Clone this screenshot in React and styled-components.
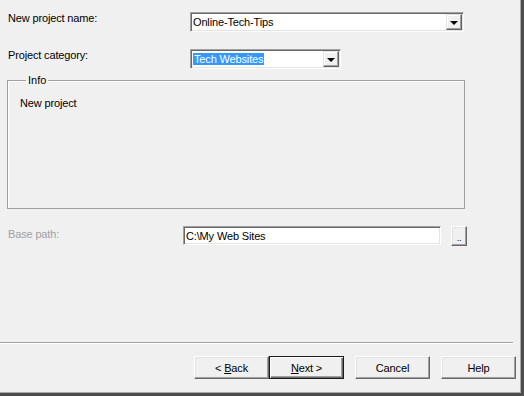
import React from "react";
import styled, { createGlobalStyle } from "styled-components";

const GlobalStyle = createGlobalStyle`
  html, body {
    margin: 0;
    padding: 0;
    background: #f0f0f0;
  }
  body {
    font-family: "Liberation Sans", Arial, sans-serif;
    font-size: 11px;
    color: #000;
  }
`;

const Frame = styled.div`
  box-sizing: border-box;
  width: 524px;
  height: 396px;
  background: #f0f0f0;
  border-right: 3px solid #4d4d4d;
  border-bottom: 3px solid #4d4d4d;
  box-shadow: inset -1px -1px 0 #a9a9a9;
  padding: 12px 0 0 8px;
  display: flex;
  flex-direction: column;
`;

const Row = styled.div`
  display: flex;
  align-items: flex-start;
  margin-top: ${(p) => p.$top || 0}px;
`;

const Label = styled.div`
  width: ${(p) => p.$width}px;
  line-height: 13px;
  padding-top: ${(p) => p.$pad || 0}px;
  color: ${(p) => (p.$disabled ? "#a0a0a0" : "#000")};
  letter-spacing: -0.15px;
`;

const Sunken = styled.div`
  box-sizing: border-box;
  width: ${(p) => p.$width}px;
  height: ${(p) => p.$height || 20}px;
  background: #fff;
  border: 1px solid;
  border-color: #a0a0a0 #ffffff #ffffff #a0a0a0;
  box-shadow: inset 1px 1px 0 #696969, inset -1px -1px 0 #e3e3e3;
  display: flex;
  align-items: center;
  padding: 0 2px 0 2px;
  line-height: 13px;
  color: #000;
`;

const Value = styled.span`
  flex: 1;
  padding-top: 1px;
  letter-spacing: -0.15px;
  white-space: nowrap;
`;

const Selected = styled.span`
  background: #3399ff;
  color: #fff;
  padding: 0 1px;
  letter-spacing: -0.15px;
`;

const DropButton = styled.div`
  box-sizing: border-box;
  width: 16px;
  height: 16px;
  background: #f0f0f0;
  border: 1px solid;
  border-color: #e3e3e3 #646464 #646464 #e3e3e3;
  box-shadow: inset -1px -1px 0 #a0a0a0, inset 1px 1px 0 #ffffff;
  display: flex;
  align-items: center;
  justify-content: center;
  margin-right: -1px;
`;

const Arrow = styled.span`
  width: 0;
  height: 0;
  border-left: 4px solid transparent;
  border-right: 4px solid transparent;
  border-top: 4px solid #000;
  margin-top: 1px;
`;

const Group = styled.fieldset`
  box-sizing: border-box;
  width: 458px;
  height: 135px;
  margin: 5px 0 0 -1px;
  padding: 10px 12px;
  border: 1px solid #a0a0a0;
  box-shadow: inset 1px 1px 0 #ffffff;
`;

const Legend = styled.legend`
  padding: 0 2px;
  margin-left: 6px;
  line-height: 13px;
`;

const GroupText = styled.div`
  line-height: 13px;
  letter-spacing: -0.15px;
`;

const Raised = styled.button`
  box-sizing: border-box;
  width: ${(p) => p.$width || 75}px;
  height: ${(p) => p.$height || 23}px;
  margin: 0 0 0 ${(p) => p.$gap || 0}px;
  padding: 0;
  background: #f0f0f0;
  font-family: "Liberation Sans", Arial, sans-serif;
  font-size: 11px;
  color: #000;
  letter-spacing: -0.15px;
  border: 1px solid;
  border-color: ${(p) =>
    p.$default ? "#1a1a1a" : "#ffffff #696969 #696969 #ffffff"};
  box-shadow: ${(p) =>
    p.$default
      ? "inset 1px 1px 0 #ffffff, inset -1px -1px 0 #696969, inset -2px -2px 0 #a0a0a0"
      : "inset -1px -1px 0 #a0a0a0, inset 1px 1px 0 #e3e3e3"};
  display: flex;
  align-items: center;
  justify-content: center;
  cursor: default;
`;

const Dots = styled.span`
  font-size: 9px;
  margin-top: 4px;
`;

const Spacer = styled.div`
  flex: 1;
`;

const Separator = styled.div`
  width: 513px;
  margin-left: -8px;
  height: 1px;
  background: #a0a0a0;
  border-bottom: 1px solid #ffffff;
`;

const ButtonBar = styled.div`
  display: flex;
  margin: 12px 0 14px 186px;
`;

const Mnemonic = styled.span`
  text-decoration: underline;
  text-underline-offset: 1px;
`;

export default function App() {
  return (
    <>
      <GlobalStyle />
      <Frame>
        <Row>
          <Label $width={182}>New project name:</Label>
          <Sunken $width={274}>
            <Value>Online-Tech-Tips</Value>
            <DropButton>
              <Arrow />
            </DropButton>
          </Sunken>
        </Row>

        <Row $top={17}>
          <Label $width={182}>Project category:</Label>
          <Sunken $width={151}>
            <Value>
              <Selected>Tech Websites</Selected>
            </Value>
            <DropButton>
              <Arrow />
            </DropButton>
          </Sunken>
        </Row>

        <Group>
          <Legend>Info</Legend>
          <GroupText>New project</GroupText>
        </Group>

        <Row $top={17}>
          <Label $width={175} $pad={2} $disabled>
            Base path:
          </Label>
          <Sunken $width={258} $height={19}>
            <Value>C:\My Web Sites</Value>
          </Sunken>
          <Raised $width={16} $height={20} $gap={10}>
            <Dots>..</Dots>
          </Raised>
        </Row>

        <Spacer />
        <Separator />
        <ButtonBar>
          <Raised>
            &lt;&nbsp;<Mnemonic>B</Mnemonic>ack
          </Raised>
          <Raised $default>
            <Mnemonic>N</Mnemonic>ext &gt;
          </Raised>
          <Raised $gap={11}>Cancel</Raised>
          <Raised $gap={11}>Help</Raised>
        </ButtonBar>
      </Frame>
    </>
  );
}
